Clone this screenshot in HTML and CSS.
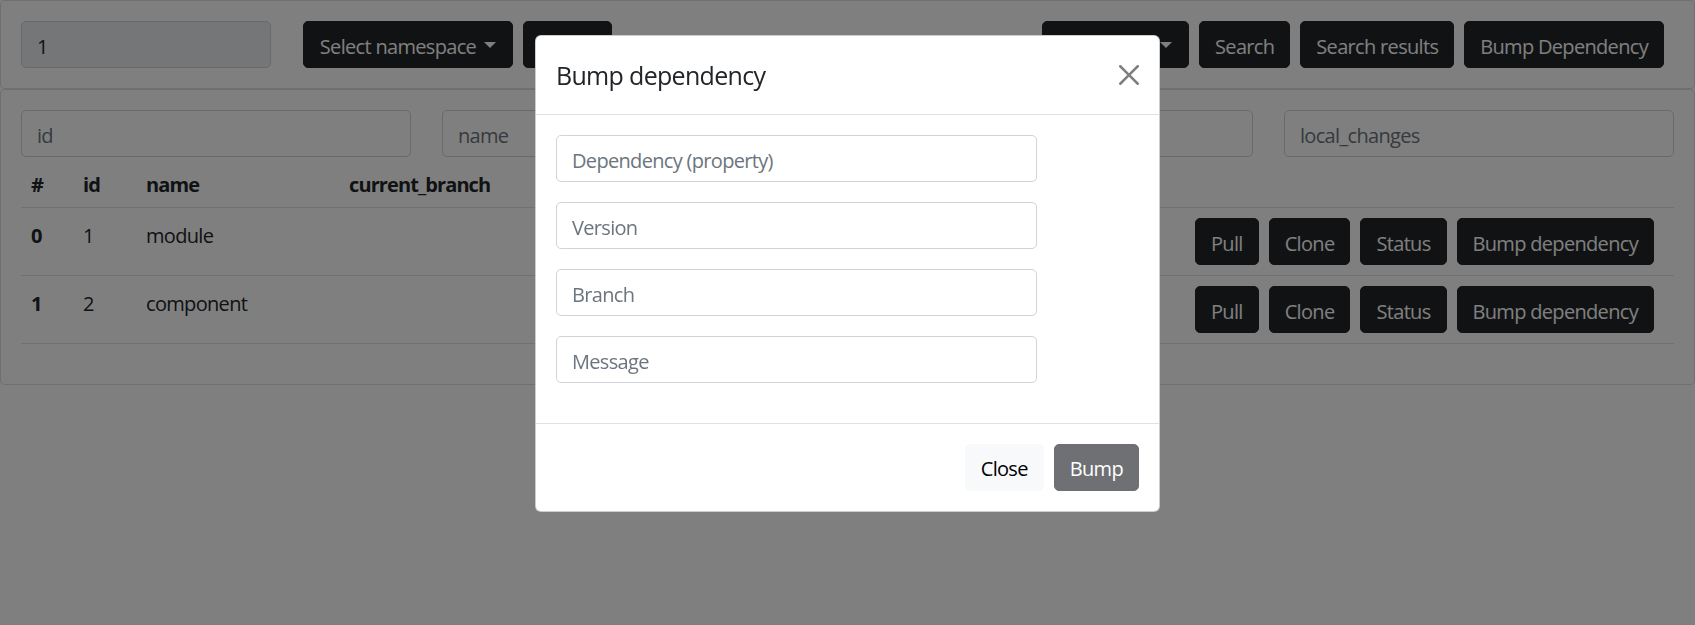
FILE: index.html
```html
<!DOCTYPE html>
<html lang="en">
<head>
<meta charset="utf-8">
<title>Modules</title>
<link rel="stylesheet" href="styles.css">
</head>
<body>
<div class="card">
  <div class="card-body toolbar">
    <input class="form-control ns-input" type="text" value="1" disabled>
    <div class="left-group">
      <button class="btn btn-dark dropdown-toggle btn-ns">Select namespace</button>
      <button class="btn btn-dark btn-load">Load</button>
    </div>
    <div class="right-group">
      <button class="btn btn-dark dropdown-toggle btn-type">Select type</button>
      <button class="btn btn-dark">Search</button>
      <button class="btn btn-dark">Search results</button>
      <button class="btn btn-dark">Bump Dependency</button>
    </div>
  </div>
</div>
<div class="card">
  <div class="card-body">
    <div class="filters">
      <input class="form-control" type="text" placeholder="id">
      <input class="form-control" type="text" placeholder="name">
      <input class="form-control" type="text" placeholder="current_branch">
      <input class="form-control" type="text" placeholder="local_changes">
    </div>
    <table class="table">
      <colgroup>
        <col class="c-idx"><col class="c-id"><col class="c-name"><col class="c-branch"><col class="c-changes"><col class="c-actions">
      </colgroup>
      <thead>
        <tr><th>#</th><th>id</th><th>name</th><th>current_branch</th><th>local_changes</th><th></th></tr>
      </thead>
      <tbody>
        <tr>
          <th>0</th><td>1</td><td>module</td><td></td><td></td>
          <td><div class="actions"><button class="btn btn-dark">Pull</button><button class="btn btn-dark">Clone</button><button class="btn btn-dark">Status</button><button class="btn btn-dark">Bump dependency</button></div></td>
        </tr>
        <tr>
          <th>1</th><td>2</td><td>component</td><td></td><td></td>
          <td><div class="actions"><button class="btn btn-dark">Pull</button><button class="btn btn-dark">Clone</button><button class="btn btn-dark">Status</button><button class="btn btn-dark">Bump dependency</button></div></td>
        </tr>
      </tbody>
    </table>
  </div>
</div>

<div class="modal-backdrop"></div>
<div class="modal">
  <div class="modal-dialog">
    <div class="modal-content">
      <div class="modal-header">
        <h5 class="modal-title">Bump dependency</h5>
        <button class="btn-close" aria-label="Close">
          <svg viewBox="0 0 16 16" width="20" height="20"><path fill="#000" d="M.293.293a1 1 0 0 1 1.414 0L8 6.586 14.293.293a1 1 0 1 1 1.414 1.414L9.414 8l6.293 6.293a1 1 0 0 1-1.414 1.414L8 9.414l-6.293 6.293a1 1 0 0 1-1.414-1.414L6.586 8 .293 1.707a1 1 0 0 1 0-1.414z"/></svg>
        </button>
      </div>
      <div class="modal-body">
        <input class="form-control modal-input" type="text" placeholder="Dependency (property)">
        <input class="form-control modal-input" type="text" placeholder="Version">
        <input class="form-control modal-input" type="text" placeholder="Branch">
        <input class="form-control modal-input" type="text" placeholder="Message">
      </div>
      <div class="modal-footer">
        <button class="btn btn-light">Close</button>
        <button class="btn btn-dark" disabled>Bump</button>
      </div>
    </div>
  </div>
</div>
</body>
</html>
```
FILE: styles.css
```css
html { font-size: 20px; }
*, *::before, *::after { box-sizing: border-box; }
body {
  margin: 0;
  font-family: "Open Sans", "Noto Sans", sans-serif;
  font-size: 1rem;
  line-height: 1.5;
  letter-spacing: -0.034em;
  color: #212529;
  background: #fff;
}
.card {
  background: #fff;
  border: 1px solid rgba(0,0,0,.125);
  border-radius: .25rem;
}
.card-body { padding: 1rem; }
.toolbar { display: flex; align-items: center; }
.left-group { display: flex; gap: .5rem; margin-left: 1.6rem; }
.right-group { display: flex; gap: .5rem; margin-left: auto; margin-right: .5rem; }

.form-control {
  display: block;
  width: 100%;
  font: inherit;
  letter-spacing: inherit;
  line-height: 1.5;
  padding: calc(.375rem + 2px) .75rem calc(.375rem - 2px);
  color: #212529;
  background: #fff;
  border: 1px solid #ced4da;
  border-radius: .25rem;
  height: calc(1.5em + .75rem + 2px);
  outline: none;
}
.form-control::placeholder { color: #6c757d; opacity: 1; }
.form-control:disabled { background: #e9ecef; }
.ns-input { width: 12.5rem; }

.btn {
  display: inline-block;
  font: inherit;
  letter-spacing: inherit;
  line-height: 1.5;
  padding: calc(.375rem + 2px) .75rem calc(.375rem - 2px);
  border: 1px solid transparent;
  border-radius: .25rem;
  white-space: nowrap;
  cursor: pointer;
}
.btn-dark { color: #fff; background: #212529; border-color: #212529; }
.btn-dark:disabled { opacity: .65; }
.btn-light { color: #000; background: #f8f9fa; border-color: #f8f9fa; }
.btn-ns { width: 210px; }
.btn-load { width: 89px; }
.btn-type { width: 147px; }
.dropdown-toggle::after {
  content: "";
  display: inline-block;
  margin-left: .4em;
  vertical-align: .255em;
  border-top: .3em solid;
  border-right: .3em solid transparent;
  border-bottom: 0;
  border-left: .3em solid transparent;
}

.filters {
  display: grid;
  grid-template-columns: repeat(4, 1fr);
  gap: 31px;
}
.table {
  width: 100%;
  border-collapse: collapse;
  table-layout: fixed;
  margin-bottom: 1rem;
  vertical-align: top;
}
.table th, .table td {
  padding: calc(.5rem + 3px) .5rem calc(.5rem - 3px);
  text-align: left;
  border-bottom: 1px solid #dee2e6;
  vertical-align: top;
}
.table th { font-weight: 700; letter-spacing: -0.045em; }
.c-idx { width: 52px; }
.c-id { width: 63px; }
.c-name { width: 203px; }
.c-branch { width: 300px; }
.c-changes { width: 543px; }
.table td:last-child { padding-top: .5rem; padding-bottom: .5rem; }
.actions { display: flex; gap: .5rem; justify-content: flex-end; padding-right: .5rem; }

.modal-backdrop {
  position: fixed;
  inset: 0;
  background: rgba(0,0,0,.5);
}
.modal { position: fixed; inset: 0; }
.modal-dialog { width: 31.25rem; margin: 1.75rem auto; }
.modal-content {
  background: #fff;
  border: 1px solid rgba(0,0,0,.2);
  border-radius: .3rem;
}
.modal-header {
  display: flex;
  align-items: center;
  padding: 1rem;
  border-bottom: 1px solid #dee2e6;
}
.modal-title { margin: 0; font-size: 1.25rem; font-weight: 400; line-height: 1.5; position: relative; top: 1px; }
.btn-close {
  display: flex;
  box-sizing: content-box;
  font-size: 1rem;
  width: 1em;
  height: 1em;
  padding: .5rem;
  margin: -.5rem -.5rem -.5rem auto;
  border: 0;
  background: transparent;
  opacity: .5;
  cursor: pointer;
}
.btn-close svg { display: block; width: 100%; height: 100%; }
.modal-body { padding: 1rem; }
.modal-input { width: 24.05rem; margin-bottom: 1rem; }
.modal-footer {
  display: flex;
  justify-content: flex-end;
  align-items: center;
  padding: .75rem;
  border-top: 1px solid #dee2e6;
}
.modal-footer .btn { margin: .25rem; }
```
